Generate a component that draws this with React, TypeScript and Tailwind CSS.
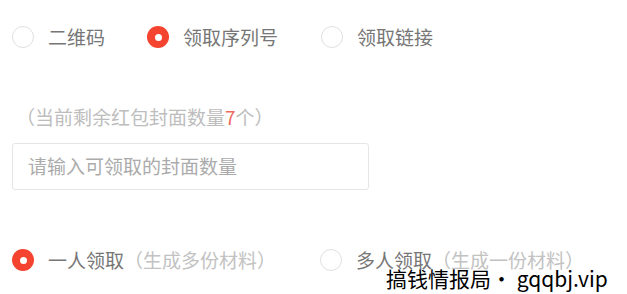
import React from "react";

const font = { fontFamily: '"Noto Sans CJK SC", "Noto Sans", sans-serif' };

function Radio({ checked }: { checked?: boolean }) {
  return checked ? (
    <span className="flex h-[22px] w-[22px] shrink-0 items-center justify-center rounded-full bg-[#f4432f]">
      <span className="h-[7px] w-[7px] rounded-full bg-white" />
    </span>
  ) : (
    <span className="h-[22px] w-[22px] shrink-0 rounded-full border-[1.5px] border-[#e0e0e0] bg-white" />
  );
}

export default function App() {
  return (
    <div
      className="relative h-[294px] w-[627px] overflow-hidden bg-white pl-[12px] pt-[26px] text-[19px]"
      style={font}
    >
      <div className="flex h-[22px] items-center leading-[22px] text-[#767676]">
        <Radio />
        <span className="ml-[14px] mr-[42px]">二维码</span>
        <Radio checked />
        <span className="ml-[14px] mr-[43px]">领取序列号</span>
        <Radio />
        <span className="ml-[14px]">领取链接</span>
      </div>

      <p className="ml-[4px] mt-[58px] h-[22px] leading-[22px] text-[#bdbdbd]">
        （当前剩余红包封面数量<span className="text-[#ef6a5e]">7</span>个）
      </p>

      <div className="mt-[15px] flex h-[47px] w-[357px] items-center rounded-[3px] border border-[#e6e6e6] pl-[15px] text-[#ababab]">
        请输入可领取的封面数量
      </div>

      <div className="mt-[59px] flex h-[22px] items-center leading-[22px]">
        <Radio checked />
        <span className="ml-[14px] text-[#767676]">一人领取</span>
        <span className="mr-[44px] text-[#c2c2c2]">（生成多份材料）</span>
        <Radio />
        <span className="ml-[14px] text-[#767676]">多人领取</span>
        <span className="text-[#c2c2c2]">（生成一份材料）</span>
      </div>

      <div className="absolute left-[386px] top-[266px] whitespace-nowrap text-[21px] leading-[24px] text-black">
        搞钱情报局· gqqbj.vip
      </div>
    </div>
  );
}
